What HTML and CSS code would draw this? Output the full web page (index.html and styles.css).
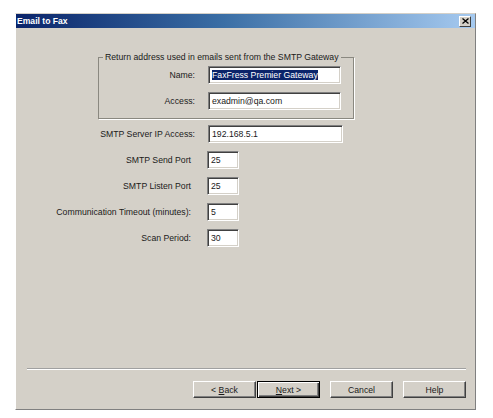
FILE: index.html
```html
<!DOCTYPE html>
<html>
<head>
<meta charset="utf-8">
<title>Email to Fax</title>
<link rel="stylesheet" href="styles.css">
</head>
<body>
<div class="window">
  <div class="titlebar">
    <span class="title">Email to Fax</span>
    <span class="close"><svg width="7" height="6" viewBox="0 0 7 6"><path d="M0.5 0.5 L6.5 5.5 M6.5 0.5 L0.5 5.5" stroke="#000" stroke-width="1.3" fill="none"/></svg></span>
  </div>
  <div class="body">
    <div class="form">
      <fieldset class="group">
        <legend>Return address used in emails sent from the SMTP Gateway</legend>
        <div class="grow"><span class="glabel">Name:</span><div class="field wide"><span class="sel">FaxFress Premier Gateway</span></div></div>
        <div class="grow gap"><span class="glabel">Access:</span><div class="field wide">exadmin@qa.com</div></div>
      </fieldset>
      <div class="row first"><span class="label">SMTP Server IP Access:</span><div class="field server">192.168.5.1</div></div>
      <div class="row"><span class="label slabel">SMTP Send Port</span><div class="field small">25</div></div>
      <div class="row"><span class="label slabel">SMTP Listen Port</span><div class="field small">25</div></div>
      <div class="row"><span class="label slabel">Communication Timeout (minutes):</span><div class="field small">5</div></div>
      <div class="row"><span class="label slabel">Scan Period:</span><div class="field small">30</div></div>
    </div>
    <div class="spacer"></div>
    <div class="sep"></div>
    <div class="buttons">
      <div class="btn"><span>&lt;&nbsp;<u>B</u>ack</span></div>
      <div class="btn default"><span><u>N</u>ext&nbsp;&gt;</span></div>
      <div class="btn cancel"><span>Cancel</span></div>
      <div class="btn help"><span>Help</span></div>
    </div>
  </div>
</div>
</body>
</html>
```

FILE: styles.css
```css
html, body {
  margin: 0;
  padding: 0;
  background: #ffffff;
}
body {
  font-family: "Liberation Sans", Arial, sans-serif;
  font-size: 8.7px;
  color: #1a1a1a;
}
.window {
  margin: 13px 0 0 15px;
  width: 461px;
  height: 397px;
  box-sizing: border-box;
  background: #d4d0c8;
  border-top: 1px solid #d4d0c8;
  border-left: 1px solid #ffffff;
  border-right: 1px solid #808080;
  border-bottom: 1px solid #808080;
  display: flex;
  flex-direction: column;
}
.titlebar {
  height: 14px;
  background: linear-gradient(to right, #0a246a 0%, #3a6ea5 45%, #a6caf0 100%);
  display: flex;
  align-items: center;
  justify-content: space-between;
  padding: 0 4px 0 1px;
}
.title {
  color: #fff;
  font-weight: bold;
  font-size: 8.6px;
  line-height: 14px;
}
.close {
  width: 12px;
  height: 11px;
  box-sizing: border-box;
  background: #d4d0c8;
  border-top: 1px solid #fff;
  border-left: 1px solid #fff;
  border-right: 1px solid #404040;
  border-bottom: 1px solid #404040;
  display: flex;
  align-items: center;
  justify-content: center;
}
.body {
  flex: 1;
  display: flex;
  flex-direction: column;
}
.form {
  display: flex;
  flex-direction: column;
}
.group {
  margin: 24px 0 0 82px;
  width: 256px;
  box-sizing: border-box;
  border: 1px solid #8a8880;
  box-shadow: 1px 1px 0 #fff;
  padding: 3px 0 8px 0;
  min-width: 0;
}
.group legend {
  padding: 0 2px;
  margin-left: 4px;
  line-height: 11px;
  font-size: 8.7px;
}
.grow {
  display: flex;
  align-items: center;
}
.grow.gap {
  margin-top: 8px;
}
.glabel {
  width: 96px;
  margin-right: 13px;
  text-align: right;
}
.row {
  display: flex;
  align-items: center;
  margin-top: 8px;
}
.row.first {
  margin-top: 6px;
}
.label {
  width: 179px;
  margin-right: 13px;
  text-align: right;
}
.label.slabel {
  width: 175px;
  margin-right: 16px;
}
.field {
  box-sizing: border-box;
  height: 18px;
  background: #fff;
  border: 1px solid;
  border-color: #808080 #ffffff #ffffff #808080;
  box-shadow: inset 1px 1px 0 #404040, inset -1px -1px 0 #d4d0c8;
  padding: 0 3px;
  display: flex;
  align-items: center;
  white-space: nowrap;
  overflow: hidden;
}
.field.wide {
  width: 133px;
}
.field.server {
  width: 135px;
}
.field.small {
  width: 32px;
}
.sel {
  background: #0a246a;
  color: #fff;
}
.spacer {
  flex: 1;
}
.sep {
  height: 0;
  border-top: 1px solid #a0a0a0;
  border-bottom: 1px solid #ffffff;
  margin: 0 9px 0 11px;
}
.buttons {
  display: flex;
  justify-content: flex-end;
  margin-top: 11px;
  padding: 0 9px 11px 0;
}
.btn {
  width: 63px;
  height: 17px;
  box-sizing: border-box;
  background: #d4d0c8;
  border: 1px solid;
  border-color: #ffffff #404040 #404040 #ffffff;
  box-shadow: inset -1px -1px 0 #808080;
  display: flex;
  align-items: center;
  justify-content: center;
  font-size: 8.7px;
}
.btn.default {
  margin-left: 1px;
  border: 1px solid #000;
  box-shadow: inset 1px 1px 0 #fff, inset -1px -1px 0 #404040, inset -2px -2px 0 #808080;
}
.btn.cancel {
  margin-left: 10px;
}
.btn.help {
  margin-left: 10px;
}
```
